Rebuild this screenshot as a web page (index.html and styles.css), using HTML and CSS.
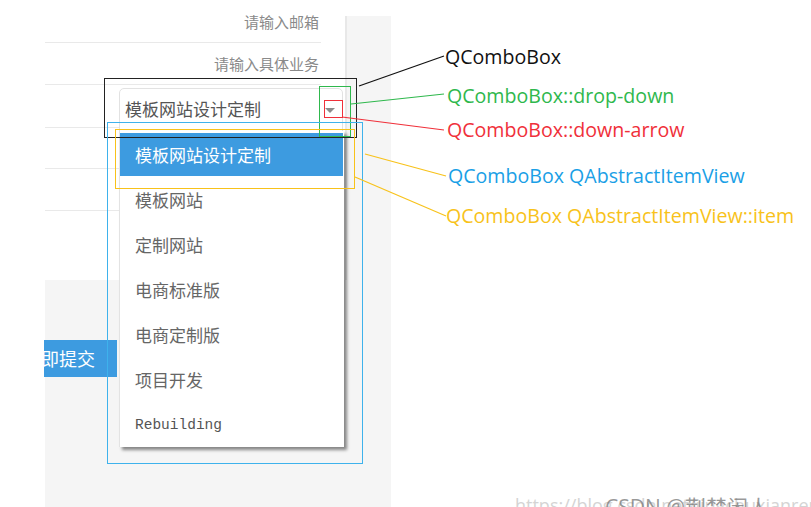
FILE: index.html
```html
<!DOCTYPE html>
<html lang="zh">
<head>
<meta charset="utf-8">
<title>QComboBox 样式</title>
<link rel="stylesheet" href="styles.css">
</head>
<body>
<div class="stage">
  <div class="panel">
    <div class="top">
      <div class="form">
        <div class="row"><span class="ph">请输入邮箱</span></div>
        <div class="row"><span class="ph">请输入具体业务</span></div>
        <div class="row row-combo">
          <div class="combo">
            <span class="combo-text">模板网站设计定制</span>
            <span class="combo-drop"><span class="combo-arrow"></span></span>
          </div>
        </div>
        <div class="row"></div>
        <div class="row"></div>
        <div class="row row-tall"></div>
      </div>
      <div class="strip"></div>
    </div>
    <div class="bottom">
      <div class="submit">立即提交</div>
    </div>
  </div>

  <div class="popup">
    <div class="item item-sel">模板网站设计定制</div>
    <div class="item">模板网站</div>
    <div class="item">定制网站</div>
    <div class="item">电商标准版</div>
    <div class="item">电商定制版</div>
    <div class="item">项目开发</div>
    <div class="item item-mono">Rebuilding</div>
  </div>

  <div class="box box-black"></div>
  <div class="box box-green"></div>
  <div class="box box-red"></div>
  <div class="box box-blue"></div>
  <div class="box box-yellow"></div>

  <svg class="leaders" width="811" height="507" viewBox="0 0 811 507">
    <line x1="359" y1="86" x2="444" y2="56" stroke="#111" stroke-width="1.2"/>
    <line x1="351" y1="104" x2="444" y2="94" stroke="#2fb84d" stroke-width="1.2"/>
    <line x1="342" y1="117" x2="444" y2="130" stroke="#f0303a" stroke-width="1.2"/>
    <line x1="365" y1="154" x2="446" y2="176" stroke="#f8c21a" stroke-width="1.2"/>
    <line x1="355" y1="177" x2="446" y2="216" stroke="#f8c21a" stroke-width="1.2"/>
  </svg>

  <div class="label label-black">QComboBox</div>
  <div class="label label-green">QComboBox::drop-down</div>
  <div class="label label-red">QComboBox::down-arrow</div>
  <div class="label label-blue">QComboBox QAbstractItemView</div>
  <div class="label label-yellow">QComboBox QAbstractItemView::item</div>

  <div class="wm wm-url">https://blog.csdn.net/jingchuxianren</div>
  <div class="wm wm-name">CSDN @荆楚闲人</div>
</div>
</body>
</html>
```

FILE: styles.css
```css
* { box-sizing: border-box; }
html, body {
  margin: 0;
  padding: 0;
  background: #ffffff;
}
body {
  font-family: "Noto Sans CJK SC", "Noto Sans", sans-serif;
}
.stage {
  position: relative;
  width: 811px;
  height: 507px;
  overflow: hidden;
  background: #ffffff;
}
.panel {
  margin-left: 45px;
  width: 346px;
  height: 507px;
  display: flex;
  flex-direction: column;
}
.top {
  display: flex;
  height: 280px;
}
.form {
  width: 300px;
  background: #ffffff;
  display: flex;
  flex-direction: column;
}
.row {
  height: 42px;
  margin-right: 24px;
  border-bottom: 1px solid #e9e9e9;
  display: flex;
  align-items: center;
  justify-content: flex-end;
}
.row:first-child { height: 43px; }
.row-tall {
  flex: 1;
  border-bottom: none;
}
.row-combo {
  margin-right: 0;
  border-bottom: none;
  align-items: flex-start;
  justify-content: flex-start;
  position: relative;
}
.row-combo::after {
  content: "";
  position: absolute;
  left: 0;
  right: 24px;
  bottom: -1px;
  border-bottom: 1px solid #e9e9e9;
}
.ph {
  font-size: 15px;
  color: #8a8a8a;
  padding-right: 2px;
  line-height: 1;
}
.combo {
  margin-left: 74px;
  margin-top: 3px;
  width: 224px;
  height: 52px;
  border: 1px solid #e2e2e2;
  border-radius: 5px;
  background: #fff;
  display: flex;
  align-items: flex-start;
  position: relative;
  z-index: 1;
}
.combo-text {
  font-size: 17px;
  color: #555;
  margin-left: 5px;
  margin-top: 8px;
  line-height: 24px;
  flex: 1;
}
.combo-drop {
  width: 24px;
  display: flex;
  justify-content: center;
  padding-top: 19px;
}
.combo-arrow {
  width: 0;
  height: 0;
  border-left: 5px solid transparent;
  border-right: 5px solid transparent;
  border-top: 5px solid #8c8c8c;
}
.strip {
  width: 46px;
  margin-top: 16px;
  background: #f5f5f5;
  border-left: 2px solid #e8e8e8;
}
.bottom {
  flex: 1;
  background: #f5f5f5;
  padding-top: 60px;
}
.submit {
  width: 73px;
  height: 37px;
  margin-left: -1px;
  background: #3d9be0;
  color: #fff;
  font-size: 18px;
  line-height: 37px;
  white-space: nowrap;
  overflow: hidden;
  text-indent: -21px;
}

/* dropdown popup (overlay) */
.popup {
  position: absolute;
  left: 119px;
  top: 131px;
  width: 225px;
  height: 316px;
  background: #fff;
  border-left: 1px solid #e3e3e3;
  box-shadow: 3px 3px 3px rgba(0, 0, 0, 0.45);
  z-index: 2;
}
.item {
  height: 45px;
  padding-left: 15px;
  font-size: 17px;
  color: #666;
  display: flex;
  align-items: center;
}
.item-sel {
  height: 43px;
  margin: 2px 1px 1px 0;
  background: #3d9be0;
  color: #fff;
}
.item-mono {
  font-family: "Liberation Mono", "DejaVu Sans Mono", monospace;
  font-size: 14.5px;
  color: #555;
}

/* annotation boxes */
.box {
  position: absolute;
  z-index: 3;
  border: 1px solid;
}
.box-black { left: 104px; top: 78px; width: 253px; height: 60px; border-color: #222; border-width: 1.5px; }
.box-green { left: 319px; top: 86px; width: 32px; height: 51px; border-color: #2fb84d; }
.box-red { left: 324px; top: 100px; width: 19px; height: 18px; border-color: #f0303a; }
.box-blue { left: 107px; top: 122px; width: 256px; height: 342px; border-color: #3eb2ec; border-width: 1.5px; }
.box-yellow { left: 115px; top: 129px; width: 240px; height: 60px; border-color: #f8c21a; border-width: 1.5px; }

.leaders {
  position: absolute;
  left: 0;
  top: 0;
  z-index: 4;
}
.label {
  position: absolute;
  z-index: 4;
  font-family: "Open Sans", "Noto Sans", sans-serif;
  font-size: 19.6px;
  line-height: 26px;
  white-space: nowrap;
}
.label-black { left: 445px; top: 44px; color: #111; }
.label-green { left: 447px; top: 83px; color: #2fb84d; }
.label-red { left: 447px; top: 117px; color: #f0303a; }
.label-blue { left: 448px; top: 163px; color: #1aa0e6; }
.label-yellow { left: 446px; top: 203px; color: #f8c21a; }

.wm {
  position: absolute;
  white-space: nowrap;
  z-index: 5;
}
.wm-url {
  left: 515px;
  top: 493px;
  font-family: "Open Sans", sans-serif;
  font-size: 18px;
  color: #d4d4d4;
}
.wm-name {
  left: 605px;
  top: 491px;
  font-family: "Open Sans", "Noto Sans CJK SC", sans-serif;
  font-size: 21px;
  color: rgba(120, 120, 120, 0.75);
}
```
